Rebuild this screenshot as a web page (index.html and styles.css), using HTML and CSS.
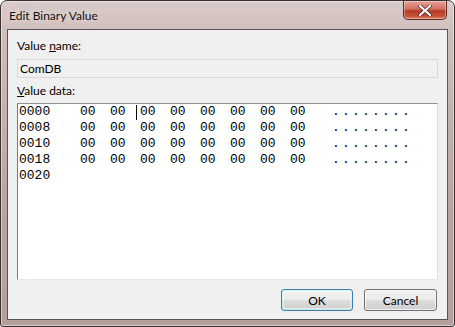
FILE: index.html
```html
<!DOCTYPE html>
<html lang="en">
<head>
  <meta charset="UTF-8" />
  <title>Edit Binary Value</title>
  <link rel="stylesheet" href="styles.css">
</head>
<body>

  <div class="window">
    <div class="titlebar">
      <span class="title">Edit Binary Value</span>
      <button class="close" aria-label="Close">
        <svg width="14" height="11" viewBox="0 0 14 11">
          <path d="M2 1 L12 10 M12 1 L2 10" stroke="#5a2020" stroke-width="3.6" stroke-linecap="round" />
          <path d="M2 1 L12 10 M12 1 L2 10" stroke="#fff" stroke-width="2.2" stroke-linecap="round" />
        </svg>
      </button>
    </div>

    <div class="client">
      <div class="field-label">Value <u>n</u>ame:</div>
      <div class="name-box">ComDB</div>

      <div class="field-label data-label"><u>V</u>alue data:</div>
      <div class="data-box">
        <div class="row">
          <span class="offset">0000</span>
          <span class="byte">00</span><span class="byte caret-after">00</span><span class="byte">00</span><span class="byte">00</span>
          <span class="byte">00</span><span class="byte">00</span><span class="byte">00</span><span class="byte">00</span>
          <span class="ascii">........</span>
        </div>
        <div class="row">
          <span class="offset">0008</span>
          <span class="byte">00</span><span class="byte">00</span><span class="byte">00</span><span class="byte">00</span>
          <span class="byte">00</span><span class="byte">00</span><span class="byte">00</span><span class="byte">00</span>
          <span class="ascii">........</span>
        </div>
        <div class="row">
          <span class="offset">0010</span>
          <span class="byte">00</span><span class="byte">00</span><span class="byte">00</span><span class="byte">00</span>
          <span class="byte">00</span><span class="byte">00</span><span class="byte">00</span><span class="byte">00</span>
          <span class="ascii">........</span>
        </div>
        <div class="row">
          <span class="offset">0018</span>
          <span class="byte">00</span><span class="byte">00</span><span class="byte">00</span><span class="byte">00</span>
          <span class="byte">00</span><span class="byte">00</span><span class="byte">00</span><span class="byte">00</span>
          <span class="ascii">........</span>
        </div>
        <div class="row">
          <span class="offset">0020</span>
        </div>
      </div>

      <div class="actions">
        <button class="btn default">OK</button>
        <button class="btn">Cancel</button>
      </div>
    </div>
  </div>

</body>
</html>
```

FILE: styles.css
```css
* { box-sizing: border-box; margin: 0; padding: 0; }
body, html {
  width: 455px;
  height: 327px;
  overflow: hidden;
  background: #fff;
  font-family: Lato, 'Liberation Sans', sans-serif;
  font-size: 12px;
  color: #000;
}

.window {
  width: 455px;
  height: 327px;
  display: flex;
  flex-direction: column;
  padding: 0 6px 6px 6px;
  border: 1px solid #3b3131;
  border-radius: 7px 7px 3px 3px;
  background: linear-gradient(180deg, #d9cbc9 0%, #cdbcb9 12%, #b9a6a3 60%, #b3a09d 100%);
  box-shadow: inset 0 0 0 1px rgba(255,255,255,0.45);
}

.titlebar {
  height: 28px;
  display: flex;
  align-items: flex-start;
  justify-content: space-between;
}

.title {
  padding: 7px 0 0 2px;
  font-size: 12px;
  color: #111;
  text-shadow: 0 0 6px rgba(255,255,255,0.8);
}

.close {
  width: 44px;
  height: 19px;
  margin-right: 1px;
  border: 1px solid #5b2a28;
  border-top: none;
  border-radius: 0 0 5px 5px;
  background: linear-gradient(180deg, #e6a49a 0%, #d0705f 45%, #b53a23 55%, #c8533a 85%, #de8a70 100%);
  box-shadow: inset 0 0 0 1px rgba(255,255,255,0.35);
  display: flex;
  align-items: center;
  justify-content: center;
}

.client {
  flex: 1;
  display: flex;
  flex-direction: column;
  background: #f0f0f0;
  border: 1px solid #5d5252;
  padding: 8px 9px 8px 9px;
}

.field-label {
  height: 15px;
  line-height: 15px;
  color: #000;
}

.field-label u {
  text-underline-offset: 1px;
}

.name-box {
  margin-top: 6px;
  height: 19px;
  line-height: 17px;
  padding-left: 2px;
  border: 1px solid #d9d9d9;
  background: #f0f0f0;
}

.data-label {
  margin-top: 5px;
}

.data-box {
  margin-top: 5px;
  height: 177px;
  padding: 0 0 0 1px;
  background: #fff;
  border: 1px solid #abadb3;
  border-top-color: #8e8f8f;
  border-left-color: #7b7b7b;
  border-right-color: #dbdfe6;
  border-bottom-color: #e3e9ef;
  font-family: 'Liberation Mono', monospace;
  font-size: 13px;
}

.row {
  display: flex;
  height: 16px;
  line-height: 16px;
  white-space: pre;
}

.offset {
  width: 61px;
}

.byte {
  width: 30px;
  position: relative;
}

.caret-after::after {
  content: "";
  position: absolute;
  top: 1px;
  right: 3px;
  width: 1px;
  height: 15px;
  background: #000;
}

.ascii {
  margin-left: 12px;
  letter-spacing: 2.2px;
}

.actions {
  margin-top: auto;
  display: flex;
  justify-content: flex-end;
  gap: 11px;
  padding-right: 1px;
}

.btn {
  width: 73px;
  height: 22px;
  font-family: Lato, 'Liberation Sans', sans-serif;
  font-size: 12px;
  color: #000;
  border: 1px solid #707070;
  border-radius: 3px;
  background: linear-gradient(180deg, #f2f2f2 0%, #ebebeb 49%, #dddddd 50%, #cfcfcf 100%);
  box-shadow: inset 0 0 0 1px rgba(255,255,255,0.7);
}

.btn.default {
  width: 72px;
  border-color: #3c7fb1;
  box-shadow: inset 0 0 0 1px #48d8fb33, inset 0 0 0 2px rgba(255,255,255,0.5);
}
```
